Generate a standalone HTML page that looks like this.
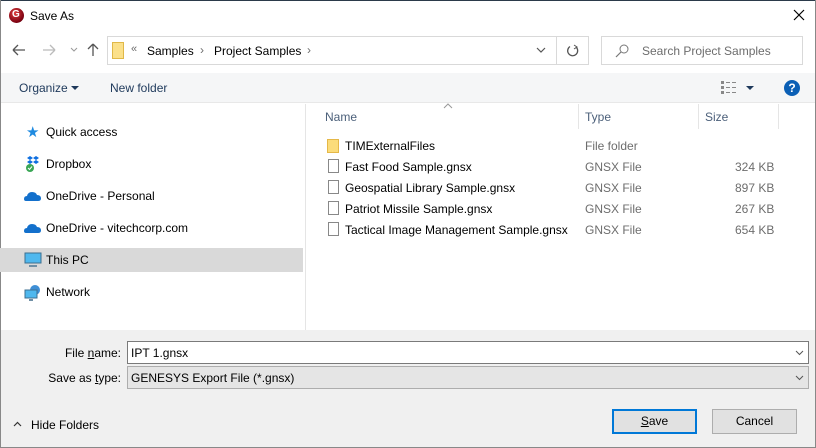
<!DOCTYPE html>
<html><head><style>
*{box-sizing:border-box;margin:0;padding:0}
body{width:816px;height:448px;overflow:hidden;background:#fff;font-family:"Liberation Sans",sans-serif;font-size:12px;color:#000;position:relative}
.a{position:absolute;white-space:nowrap}
.g{color:#6d6d6d}
</style></head><body>
<div class="a" style="left:0;top:0;width:816px;height:1px;background:#2b3a4a"></div>
<div class="a" style="left:0;top:0;width:1px;height:448px;background:#888"></div>
<div class="a" style="left:815px;top:0;width:1px;height:448px;background:#888"></div>
<!-- title -->
<div class="a" style="left:9px;top:8px;width:15px;height:15px;border-radius:50%;background:radial-gradient(circle at 40% 35%,#e04040,#7a0010 70%,#300);"></div>
<div class="a" style="left:12px;top:9px;color:#fff;font-size:10px;font-weight:bold">G</div>
<div class="a" style="left:30px;top:9px;font-size:12px">Save As</div>
<svg class="a" style="left:793px;top:9px" width="12" height="12"><path d="M1 1L11 11M11 1L1 11" stroke="#000" stroke-width="1.2"/></svg>
<!-- nav -->
<svg class="a" style="left:12px;top:44px" width="14" height="12"><path d="M1 6H13M1 6L6 1M1 6L6 11" stroke="#555" stroke-width="1.3" fill="none"/></svg>
<svg class="a" style="left:42px;top:44px" width="14" height="12"><path d="M1 6H13M13 6L8 1M13 6L8 11" stroke="#bbb" stroke-width="1.3" fill="none"/></svg>
<svg class="a" style="left:70px;top:47px" width="8" height="6"><path d="M1 1L4 4L7 1" stroke="#999" fill="none"/></svg>
<svg class="a" style="left:87px;top:43px" width="12" height="14"><path d="M6 13V1M6 1L1 6M6 1L11 6" stroke="#555" stroke-width="1.3" fill="none"/></svg>
<div class="a" style="left:107px;top:36px;width:482px;height:29px;border:1px solid #d9d9d9"></div>
<div class="a" style="left:556px;top:37px;width:1px;height:27px;background:#d9d9d9"></div>
<div class="a" style="left:112px;top:42px;width:12px;height:17px;background:#fbe08a;border:1px solid #e0b848"></div>
<div class="a g" style="left:131px;top:43px;font-size:11px">«</div>
<div class="a" style="left:147px;top:44px">Samples</div>
<div class="a g" style="left:200px;top:43px">›</div>
<div class="a" style="left:214px;top:44px">Project Samples</div>
<div class="a g" style="left:307px;top:43px">›</div>
<svg class="a" style="left:536px;top:47px" width="10" height="6"><path d="M1 1L5 5L9 1" stroke="#555" stroke-width="1.2" fill="none"/></svg>
<svg class="a" style="left:566px;top:44px" width="13" height="13"><path d="M10 3A5 5 0 1 1 4 2.5" stroke="#555" stroke-width="1.3" fill="none"/><path d="M8 1L11 3L8 5" stroke="#555" fill="none"/></svg>
<div class="a" style="left:601px;top:36px;width:202px;height:29px;border:1px solid #d9d9d9"></div>
<svg class="a" style="left:615px;top:44px" width="14" height="14"><circle cx="9" cy="5" r="4" stroke="#777" fill="none"/><path d="M6 8L1 13" stroke="#777" stroke-width="1.2"/></svg>
<div class="a g" style="left:642px;top:44px">Search Project Samples</div>
<!-- toolbar -->
<div class="a" style="left:1px;top:73px;width:814px;height:30px;background:#f5f6f7;border-bottom:1px solid #e8e8e8"></div>
<div class="a" style="left:19px;top:81px;color:#1e395b">Organize</div>
<svg class="a" style="left:71px;top:86px" width="8" height="5"><path d="M0 0H8L4 4Z" fill="#1e395b"/></svg>
<div class="a" style="left:110px;top:81px;color:#1e395b">New folder</div>
<svg class="a" style="left:721px;top:81px" width="16" height="14"><g fill="#888"><rect x="0" y="0" width="3" height="3"/><rect x="0" y="5" width="3" height="3"/><rect x="0" y="10" width="3" height="3"/><rect x="5" y="1" width="4" height="1"/><rect x="11" y="1" width="4" height="1"/><rect x="5" y="6" width="4" height="1"/><rect x="11" y="6" width="4" height="1"/><rect x="5" y="11" width="4" height="1"/><rect x="11" y="11" width="4" height="1"/></g></svg>
<svg class="a" style="left:746px;top:86px" width="8" height="5"><path d="M0 0H8L4 4Z" fill="#1e395b"/></svg>
<div class="a" style="left:784px;top:80px;width:16px;height:16px;border-radius:50%;background:#0b5fb5;color:#fff;font-weight:bold;font-size:12px;text-align:center;line-height:16px">?</div>
<!-- left pane -->
<div class="a" style="left:305px;top:104px;width:1px;height:226px;background:#e5e5e5"></div>
<div class="a" style="left:0;top:248px;width:303px;height:24px;background:#d9d9d9"></div>
<div class="a" style="left:26px;top:123px;color:#1e8ae0;font-size:15px">★</div>
<div class="a" style="left:46px;top:125px">Quick access</div>
<svg class="a" style="left:25px;top:156px" width="16" height="16"><g fill="#0d6ee0"><path d="M2 2L5 0L8 2L5 4Z"/><path d="M8 2L11 0L14 2L11 4Z"/><path d="M2 6L5 4L8 6L5 8Z"/><path d="M8 6L11 4L14 6L11 8Z"/></g><circle cx="5" cy="12" r="4" fill="#3aa655"/><path d="M3 12L4.5 13.5L7 10.5" stroke="#fff" fill="none"/></svg>
<div class="a" style="left:46px;top:157px">Dropbox</div>
<svg class="a" style="left:24px;top:191px" width="18" height="11"><path d="M2 10Q0 10 0 8Q0 5 3 5Q4 1 8 1Q12 1 13 4Q17 4 17 7.5Q17 10 14 10Z" fill="#1370cc"/></svg>
<div class="a" style="left:46px;top:189px">OneDrive - Personal</div>
<svg class="a" style="left:24px;top:223px" width="18" height="11"><path d="M2 10Q0 10 0 8Q0 5 3 5Q4 1 8 1Q12 1 13 4Q17 4 17 7.5Q17 10 14 10Z" fill="#1370cc"/></svg>
<div class="a" style="left:46px;top:221px">OneDrive - vitechcorp.com</div>
<svg class="a" style="left:24px;top:252px" width="18" height="16"><rect x="1" y="1" width="16" height="10" fill="#4fb8ee" stroke="#3c6f90"/><rect x="5" y="13" width="8" height="2" fill="#6f8fa5"/></svg>
<div class="a" style="left:46px;top:253px">This PC</div>
<svg class="a" style="left:24px;top:284px" width="18" height="17"><circle cx="11" cy="6" r="5" fill="#3f8fd6"/><rect x="1" y="6" width="12" height="8" fill="#4fb8ee" stroke="#3c6f90"/><rect x="5" y="15" width="4" height="2" fill="#6f8fa5"/></svg>
<div class="a" style="left:46px;top:285px">Network</div>
<!-- file list -->
<svg class="a" style="left:443px;top:103px" width="10" height="6"><path d="M1 5L5 1L9 5" stroke="#999" fill="none"/></svg>
<div class="a" style="left:325px;top:110px;color:#4c607a">Name</div>
<div class="a" style="left:585px;top:110px;color:#4c607a">Type</div>
<div class="a" style="left:705px;top:110px;color:#4c607a">Size</div>
<div class="a" style="left:578px;top:104px;width:1px;height:25px;background:#e5e5e5"></div>
<div class="a" style="left:698px;top:104px;width:1px;height:25px;background:#e5e5e5"></div>
<div class="a" style="left:778px;top:104px;width:1px;height:25px;background:#e5e5e5"></div>
<div class="a" style="left:327px;top:139px;width:12px;height:14px;background:#fbdc7a;border:1px solid #e5b848"></div>
<div class="a" style="left:345px;top:139px">TIMExternalFiles</div>
<div class="a g" style="left:585px;top:139px">File folder</div>
<div class="a" style="left:328px;top:159px;width:11px;height:14px;border:1px solid #888;background:#fff"></div>
<div class="a" style="left:345px;top:160px">Fast Food Sample.gnsx</div>
<div class="a g" style="left:585px;top:160px">GNSX File</div>
<div class="a g" style="left:735px;top:160px">324 KB</div>
<div class="a" style="left:328px;top:180px;width:11px;height:14px;border:1px solid #888;background:#fff"></div>
<div class="a" style="left:345px;top:181px">Geospatial Library Sample.gnsx</div>
<div class="a g" style="left:585px;top:181px">GNSX File</div>
<div class="a g" style="left:735px;top:181px">897 KB</div>
<div class="a" style="left:328px;top:201px;width:11px;height:14px;border:1px solid #888;background:#fff"></div>
<div class="a" style="left:345px;top:202px">Patriot Missile Sample.gnsx</div>
<div class="a g" style="left:585px;top:202px">GNSX File</div>
<div class="a g" style="left:735px;top:202px">267 KB</div>
<div class="a" style="left:328px;top:222px;width:11px;height:14px;border:1px solid #888;background:#fff"></div>
<div class="a" style="left:345px;top:223px">Tactical Image Management Sample.gnsx</div>
<div class="a g" style="left:585px;top:223px">GNSX File</div>
<div class="a g" style="left:735px;top:223px">654 KB</div>
<!-- bottom -->
<div class="a" style="left:1px;top:330px;width:814px;height:117px;background:#f0f0f0"></div>
<div class="a" style="left:0;top:447px;width:816px;height:1px;background:#888"></div>
<div class="a" style="left:0;top:346px;width:121px;text-align:right">File <u>n</u>ame:</div>
<div class="a" style="left:127px;top:341px;width:682px;height:23px;background:#fff;border:1px solid #7a7a7a"></div>
<div class="a" style="left:131px;top:346px">IPT 1.gnsx</div>
<svg class="a" style="left:795px;top:350px" width="9" height="6"><path d="M1 1L4.5 4.5L8 1" stroke="#555" fill="none"/></svg>
<div class="a" style="left:0;top:371px;width:121px;text-align:right">Save as <u>t</u>ype:</div>
<div class="a" style="left:127px;top:366px;width:682px;height:23px;background:#e5e5e5;border:1px solid #adadad"></div>
<div class="a" style="left:131px;top:371px">GENESYS Export File (*.gnsx)</div>
<svg class="a" style="left:795px;top:375px" width="9" height="6"><path d="M1 1L4.5 4.5L8 1" stroke="#555" fill="none"/></svg>
<svg class="a" style="left:13px;top:421px" width="9" height="6"><path d="M1 5L4.5 1.5L8 5" stroke="#333" stroke-width="1.2" fill="none"/></svg>
<div class="a" style="left:31px;top:418px">Hide Folders</div>
<div class="a" style="left:612px;top:409px;width:85px;height:25px;background:#e1e1e1;border:2px solid #0078d7;text-align:center;line-height:21px"><u>S</u>ave</div>
<div class="a" style="left:712px;top:409px;width:85px;height:25px;background:#e1e1e1;border:1px solid #adadad;text-align:center;line-height:23px">Cancel</div>
</body></html>
